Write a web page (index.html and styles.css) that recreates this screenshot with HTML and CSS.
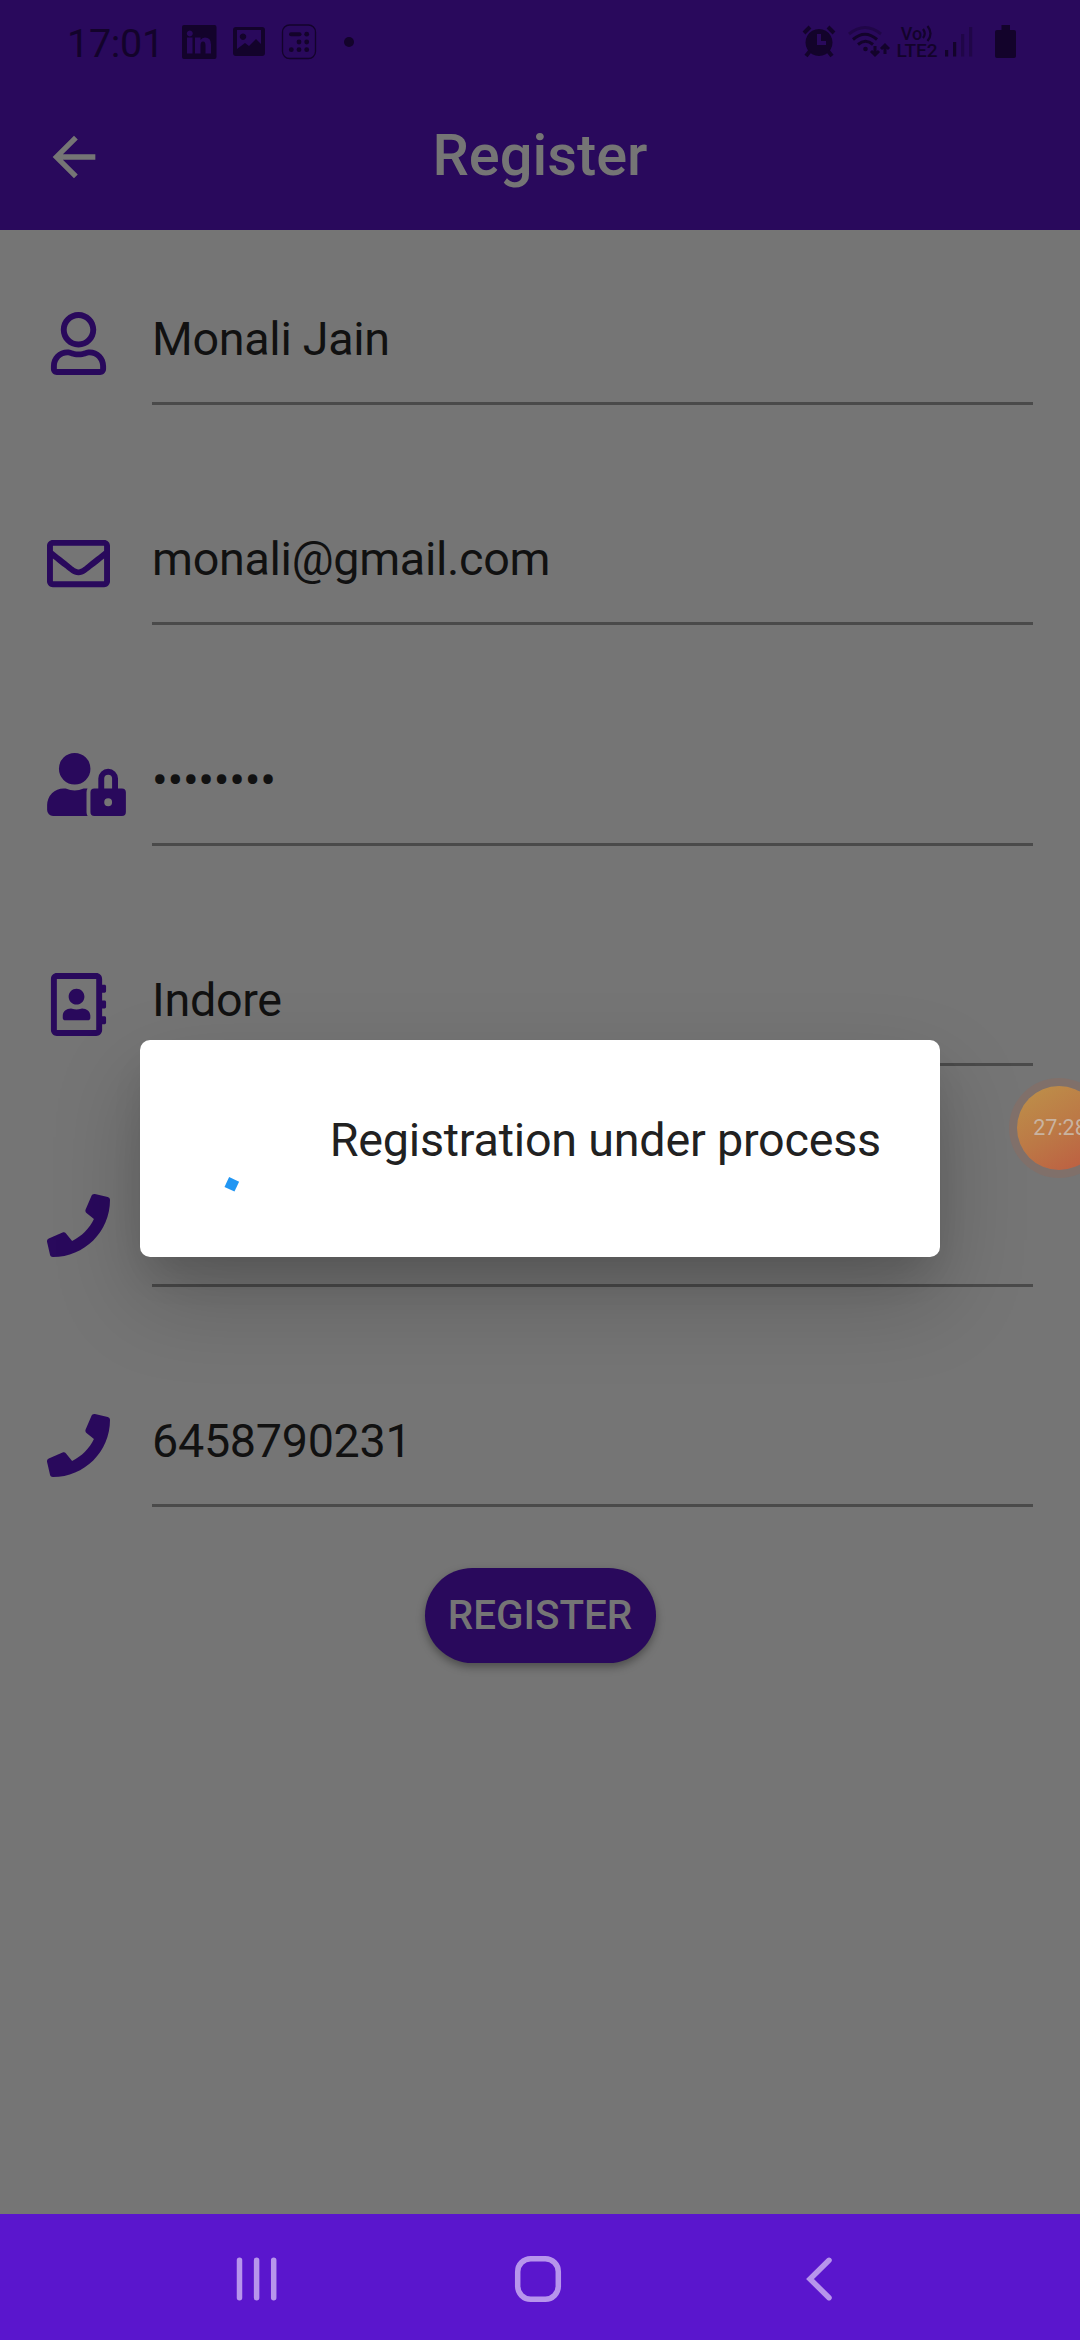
FILE: index.html
```html
<!DOCTYPE html>
<html lang="en">
<head>
<meta charset="utf-8">
<title>Register</title>
<link rel="stylesheet" href="styles.css">
</head>
<body>
<div class="screen">
  <header class="header">
    <div class="status">
      <span class="clock">17:01</span>
      <svg class="notif" width="154" height="36" viewBox="181 23 154 36">
        <path fill-rule="evenodd" d="M184 24h30.500q2 0 2 2v30q0 2-2 2h-30.500q-2 0-2-2v-30q0-2 2-2zM187 36.500v16h5.500v-16zM189.800 29.500a3 3 0 1 0 .01 0zM195 36.500v16h5.500v-8q0-4 2.500-4t2.500 4v8h5.500v-9q0-7-6-7-3 0-4.500 2.500v-2.500z"/>
        <path fill-rule="evenodd" d="M236 26h26q3 0 3 3v23q0 3-3 3h-26q-3 0-3-3v-23q0-3 3-3zM237 29v19l8-6 4 3 7-7 5 5v-14zM243 32.500a3.200 3.200 0 1 1-.01 0z"/>
        <rect x="282.500" y="24" width="33" height="33.500" rx="7" fill="none" stroke="#13032b" stroke-width="1.300"/>
        <rect x="289" y="31.200" width="12.500" height="4" rx="2"/>
        <g><circle cx="306.700" cy="33.200" r="2.400"/><circle cx="299" cy="41" r="2.400"/><circle cx="306.700" cy="41" r="2.400"/><circle cx="291.300" cy="48.700" r="2.400"/><circle cx="299" cy="48.700" r="2.400"/><circle cx="306.700" cy="48.700" r="2.400"/></g>
      </svg>
      <svg class="more" width="10" height="10" viewBox="0 0 10 10"><circle cx="5" cy="5" r="5"/></svg>
      <div class="system">
        <svg width="34" height="34" viewBox="801 25 34 34">
          <path fill-rule="evenodd" d="M818 29a13.500 13.500 0 1 0 .01 0zM816 34h4v7h5v4h-9z"/>
          <path d="M803 33l6-6M833 33l-6-6M809 51l-4 5M827 51l4 5" fill="none" stroke="#13032b" stroke-width="4"/>
        </svg>
        <svg class="wifi" width="42" height="34" viewBox="847 25 42 34">
          <g fill="none" stroke="#13032b" stroke-width="3">
            <path d="M848 34q16-13 32 0" opacity=".4"/><path d="M852 39.500q12-10.500 24 0"/><path d="M857 44.500q7.500-6.500 15 0"/>
            <path d="M874 46v9M870 51l4 4 4-4M884 54v-9M880 49l4-4 4 4"/>
          </g>
          <circle cx="864.500" cy="49" r="2.300"/>
        </svg>
        <div class="volte"><span>Vo<svg width="11" height="17" viewBox="0 0 11 17" fill="none" stroke="#13032b" stroke-width="2.200"><path d="M1 4q3.500 4.500 0 9M5.500 1q6 7.500 0 15"/></svg></span><span class="lte">LTE2</span></div>
        <svg class="signal" width="28" height="30" viewBox="944 28 28 30">
          <rect x="944" y="51" width="3.200" height="6.500"/><rect x="952" y="43" width="3.200" height="14.500"/><g opacity=".4"><rect x="960" y="35" width="3.200" height="22.500"/><rect x="968" y="28" width="3.200" height="29.500"/></g>
        </svg>
        <svg width="21" height="33" viewBox="0 0 21 33"><path d="M6.500 0h8.500v5h4q2 0 2 2v24q0 2-2 2h-17q-2 0-2-2v-24q0-2 2-2h4.500z"/></svg>
      </div>
    </div>
    <div class="appbar">
      <svg class="back" width="64" height="64" viewBox="0 0 24 24"><path d="M20 11H7.830l5.590-5.590L12 4l-8 8 8 8 1.410-1.410L7.830 13H20v-2z"/></svg>
      <h1>Register</h1>
    </div>
  </header>

  <main class="form">
    <div class="row"><div class="icon"><svg viewBox="0 0 448 512"><path d="M313.600 304c-28.700 0-42.500 16-89.600 16-47.100 0-60.800-16-89.600-16C60.200 304 0 364.200 0 438.400V464c0 26.500 21.500 48 48 48h352c26.500 0 48-21.500 48-48v-25.600c0-74.200-60.200-134.400-134.400-134.400zM400 464H48v-25.600c0-47.600 38.800-86.400 86.400-86.400 14.600 0 38.300 16 89.600 16 51.700 0 74.900-16 89.600-16 47.600 0 86.400 38.800 86.400 86.400V464zM224 288c79.500 0 144-64.500 144-144S303.500 0 224 0 80 64.500 80 144s64.500 144 144 144zm0-240c52.900 0 96 43.100 96 96s-43.100 96-96 96-96-43.100-96-96 43.100-96 96-96z"/></svg></div><div class="field">Monali Jain</div></div>
    <div class="row"><div class="icon"><svg viewBox="0 0 512 512"><path d="M464 64H48C21.490 64 0 85.490 0 112v288c0 26.510 21.490 48 48 48h416c26.510 0 48-21.490 48-48V112c0-26.510-21.490-48-48-48zm0 48v40.805c-22.422 18.259-58.168 46.651-134.587 106.490-16.841 13.247-50.201 45.072-73.413 44.701-23.208.375-56.579-31.459-73.413-44.701C106.180 199.465 70.425 171.067 48 152.805V112h416zM48 400V214.398c22.914 18.251 55.409 43.862 104.938 82.646 21.857 17.205 60.134 55.186 103.062 54.955 42.717.231 80.509-37.199 103.053-54.947 49.528-38.783 82.032-64.401 104.947-82.653V400H48z"/></svg></div><div class="field">monali@gmail.com</div></div>
    <div class="row"><div class="icon wide"><svg viewBox="0 0 640 512"><path d="M224 256A128 128 0 1 0 96 128a128 128 0 0 0 128 128zm96 64a63.080 63.080 0 0 1 8.100-30.500c-4.800-.5-9.500-1.500-14.500-1.500h-16.700a174.080 174.080 0 0 1-145.800 0h-16.700A134.430 134.430 0 0 0 0 422.400V464a48 48 0 0 0 48 48h280.900a63.540 63.540 0 0 1-8.900-32zm288-32h-32v-80a80 80 0 0 0-160 0v80h-32a32 32 0 0 0-32 32v160a32 32 0 0 0 32 32h224a32 32 0 0 0 32-32V320a32 32 0 0 0-32-32zM496 432a32 32 0 1 1 32-32 32 32 0 0 1-32 32zm32-144h-64v-80a32 32 0 0 1 64 0z"/></svg></div><div class="field">••••••••</div></div>
    <div class="row"><div class="icon"><svg viewBox="0 0 448 512"><path d="M436 160c6.600 0 12-5.400 12-12v-40c0-6.600-5.400-12-12-12h-20V48c0-26.500-21.500-48-48-48H48C21.500 0 0 21.500 0 48v416c0 26.500 21.500 48 48 48h320c26.500 0 48-21.500 48-48v-48h20c6.600 0 12-5.400 12-12v-40c0-6.600-5.400-12-12-12h-20v-64h20c6.600 0 12-5.400 12-12v-40c0-6.600-5.400-12-12-12h-20v-64h20zm-68 304H48V48h320v416zM208 256c35.300 0 64-28.700 64-64s-28.700-64-64-64-64 28.700-64 64 28.700 64 64 64zm-89.600 128h179.200c12.400 0 22.400-8.600 22.400-19.200v-19.200c0-31.800-30.100-57.600-67.200-57.600-10.800 0-18.700 8-44.800 8-26.900 0-33.400-8-44.800-8-37.100 0-67.200 25.800-67.200 57.600v19.200c0 10.600 10 19.200 22.400 19.200z"/></svg></div><div class="field">Indore</div></div>
    <div class="row"><div class="icon"><svg viewBox="0 0 512 512"><path d="M493.400 24.600l-104-24c-11.300-2.600-22.900 3.300-27.500 13.900l-48 112c-4.200 9.800-1.400 21.300 6.900 28l60.600 49.600c-36 76.700-98.900 140.500-177.200 177.200l-49.600-60.600c-6.800-8.300-18.200-11.100-28-6.900l-112 48C3.900 366.500-2 378.100.6 389.400l24 104C27.100 504.200 36.700 512 48 512c256.100 0 464-207.500 464-464 0-11.200-7.700-20.900-18.600-23.400z"/></svg></div><div class="field"></div></div>
    <div class="row"><div class="icon"><svg viewBox="0 0 512 512"><path d="M493.400 24.600l-104-24c-11.300-2.600-22.900 3.300-27.500 13.900l-48 112c-4.200 9.800-1.400 21.300 6.900 28l60.600 49.600c-36 76.700-98.900 140.500-177.200 177.200l-49.600-60.600c-6.800-8.300-18.200-11.100-28-6.900l-112 48C3.900 366.500-2 378.100.6 389.400l24 104C27.100 504.200 36.700 512 48 512c256.100 0 464-207.500 464-464 0-11.200-7.700-20.900-18.600-23.400z"/></svg></div><div class="field">6458790231</div></div>
    <button class="submit">REGISTER</button>
  </main>

  <nav class="navbar">
    <svg width="42" height="44" viewBox="0 0 42 44" fill="none" stroke="#b795ec" stroke-width="5.500" stroke-linecap="round"><path d="M3.500 3.300v37.400M20.600 3.300v37.400M37.700 3.300v37.400"/></svg>
    <svg class="home" width="48" height="48" viewBox="0 0 48 48" fill="none" stroke="#b795ec" stroke-width="5.500"><rect x="3.700" y="3.700" width="40.600" height="40.600" rx="13"/></svg>
    <svg class="prev" width="28" height="44" viewBox="0 0 28 44" fill="none" stroke="#b795ec" stroke-width="5.500" stroke-linecap="round"><path d="M24 3.300L5 22 24 40.700"/></svg>
  </nav>

  <div class="dialog">
    <svg class="spinner" width="96" height="96" viewBox="0 0 96 96"><rect x="33.300" y="78.800" width="11" height="11" transform="rotate(25 38.800 84.300)"/></svg>
    <span>Registration under process</span>
  </div>
  <div class="recorder">27:28</div>
</div>
</body>
</html>
```
FILE: styles.css
```css
* { box-sizing: border-box; }
body { margin: 0; font-family: Roboto, sans-serif; }
svg { display: block; flex: none; }

.screen {
  position: relative;
  width: 1080px;
  height: 2340px;
  overflow: hidden;
  display: flex;
  flex-direction: column;
  background: #757575;
}

.header { height: 230px; background: #29095c; }
.status {
  height: 83px;
  padding: 0 64px 0 67px;
  display: flex;
  align-items: center;
  color: #13032b;
  fill: #13032b;
}
.clock { width: 114px; font-size: 39.5px; letter-spacing: -.3px; line-height: 48px; padding-top: 4px; }
.notif { margin-right: 9px; }
.system { margin-left: auto; display: flex; align-items: center; }
.wifi { margin-left: 12px; }
.volte {
  width: 44px;
  margin: 0 6px 0 5px;
  display: flex;
  flex-direction: column;
  align-items: center;
  font-size: 18px;
  font-weight: 500;
  line-height: 17px;
}
.volte span { display: flex; }
.lte { font-size: 19px; }
.signal { margin-right: 22px; }

.appbar {
  height: 147px;
  padding: 0 42px;
  display: grid;
  grid-template-columns: 64px 1fr 64px;
  align-items: center;
}
.back { fill: #757575; }
.appbar h1 {
  margin: 0;
  padding-bottom: 4px;
  color: #757575;
  font-size: 57.75px;
  font-weight: 500;
  line-height: 68px;
  text-align: center;
}

.form {
  flex: 1;
  padding: 46px 47px 0;
  display: flex;
  flex-direction: column;
}
.row { display: flex; height: 129px; margin-bottom: 91.4px; }
.icon { width: 63px; margin-right: 42px; padding-top: 36px; fill: #29095c; }
.icon svg { width: 63px; height: 63px; }
.icon.wide { width: 79px; margin-right: 26px; }
.icon.wide svg { width: 79px; }
.field {
  flex: 1;
  padding-top: 36px;
  border-bottom: 3px solid #4a4a4a;
  color: #111;
  font-size: 46.7px;
  letter-spacing: -.3px;
  line-height: 55px;
}
.submit {
  align-self: center;
  width: 231px;
  height: 95px;
  margin-top: -30.5px;
  border: 0;
  border-radius: 48px;
  background: #29095c;
  box-shadow: 0 4px 8px rgba(0, 0, 0, .35);
  color: #757575;
  font: 500 40.4px/95px Roboto, sans-serif;
  padding: 0;
}

.navbar {
  height: 126px;
  padding: 3px 0 0 236px;
  display: flex;
  align-items: center;
  background: #5a16cd;
}
.home { margin-left: 235.6px; }
.prev { margin-left: 243px; }

.dialog {
  position: absolute;
  left: 140px;
  top: 1040px;
  width: 800px;
  height: 217px;
  padding: 60px 59px 0 53px;
  display: flex;
  justify-content: space-between;
  border-radius: 10px;
  background: #fff;
  box-shadow: 0 24px 36px -10px rgba(0, 0, 0, .12), 0 40px 90px rgba(0, 0, 0, .2);
  color: #212121;
  font-size: 46.7px;
  letter-spacing: -.22px;
  line-height: 80px;
  white-space: nowrap;
}
.spinner { fill: #2196f3; }
.recorder {
  position: absolute;
  left: 1017px;
  top: 1086px;
  width: 84px;
  height: 84px;
  padding-left: 2px;
  border-radius: 50%;
  background: linear-gradient(150deg, #bd8d49 10%, #bc7946 50%, #bd6042 90%);
  box-shadow: 0 0 0 8px #80706a;
  color: #c9b3a0;
  font-size: 21.5px;
  line-height: 84px;
  text-align: center;
}
```
